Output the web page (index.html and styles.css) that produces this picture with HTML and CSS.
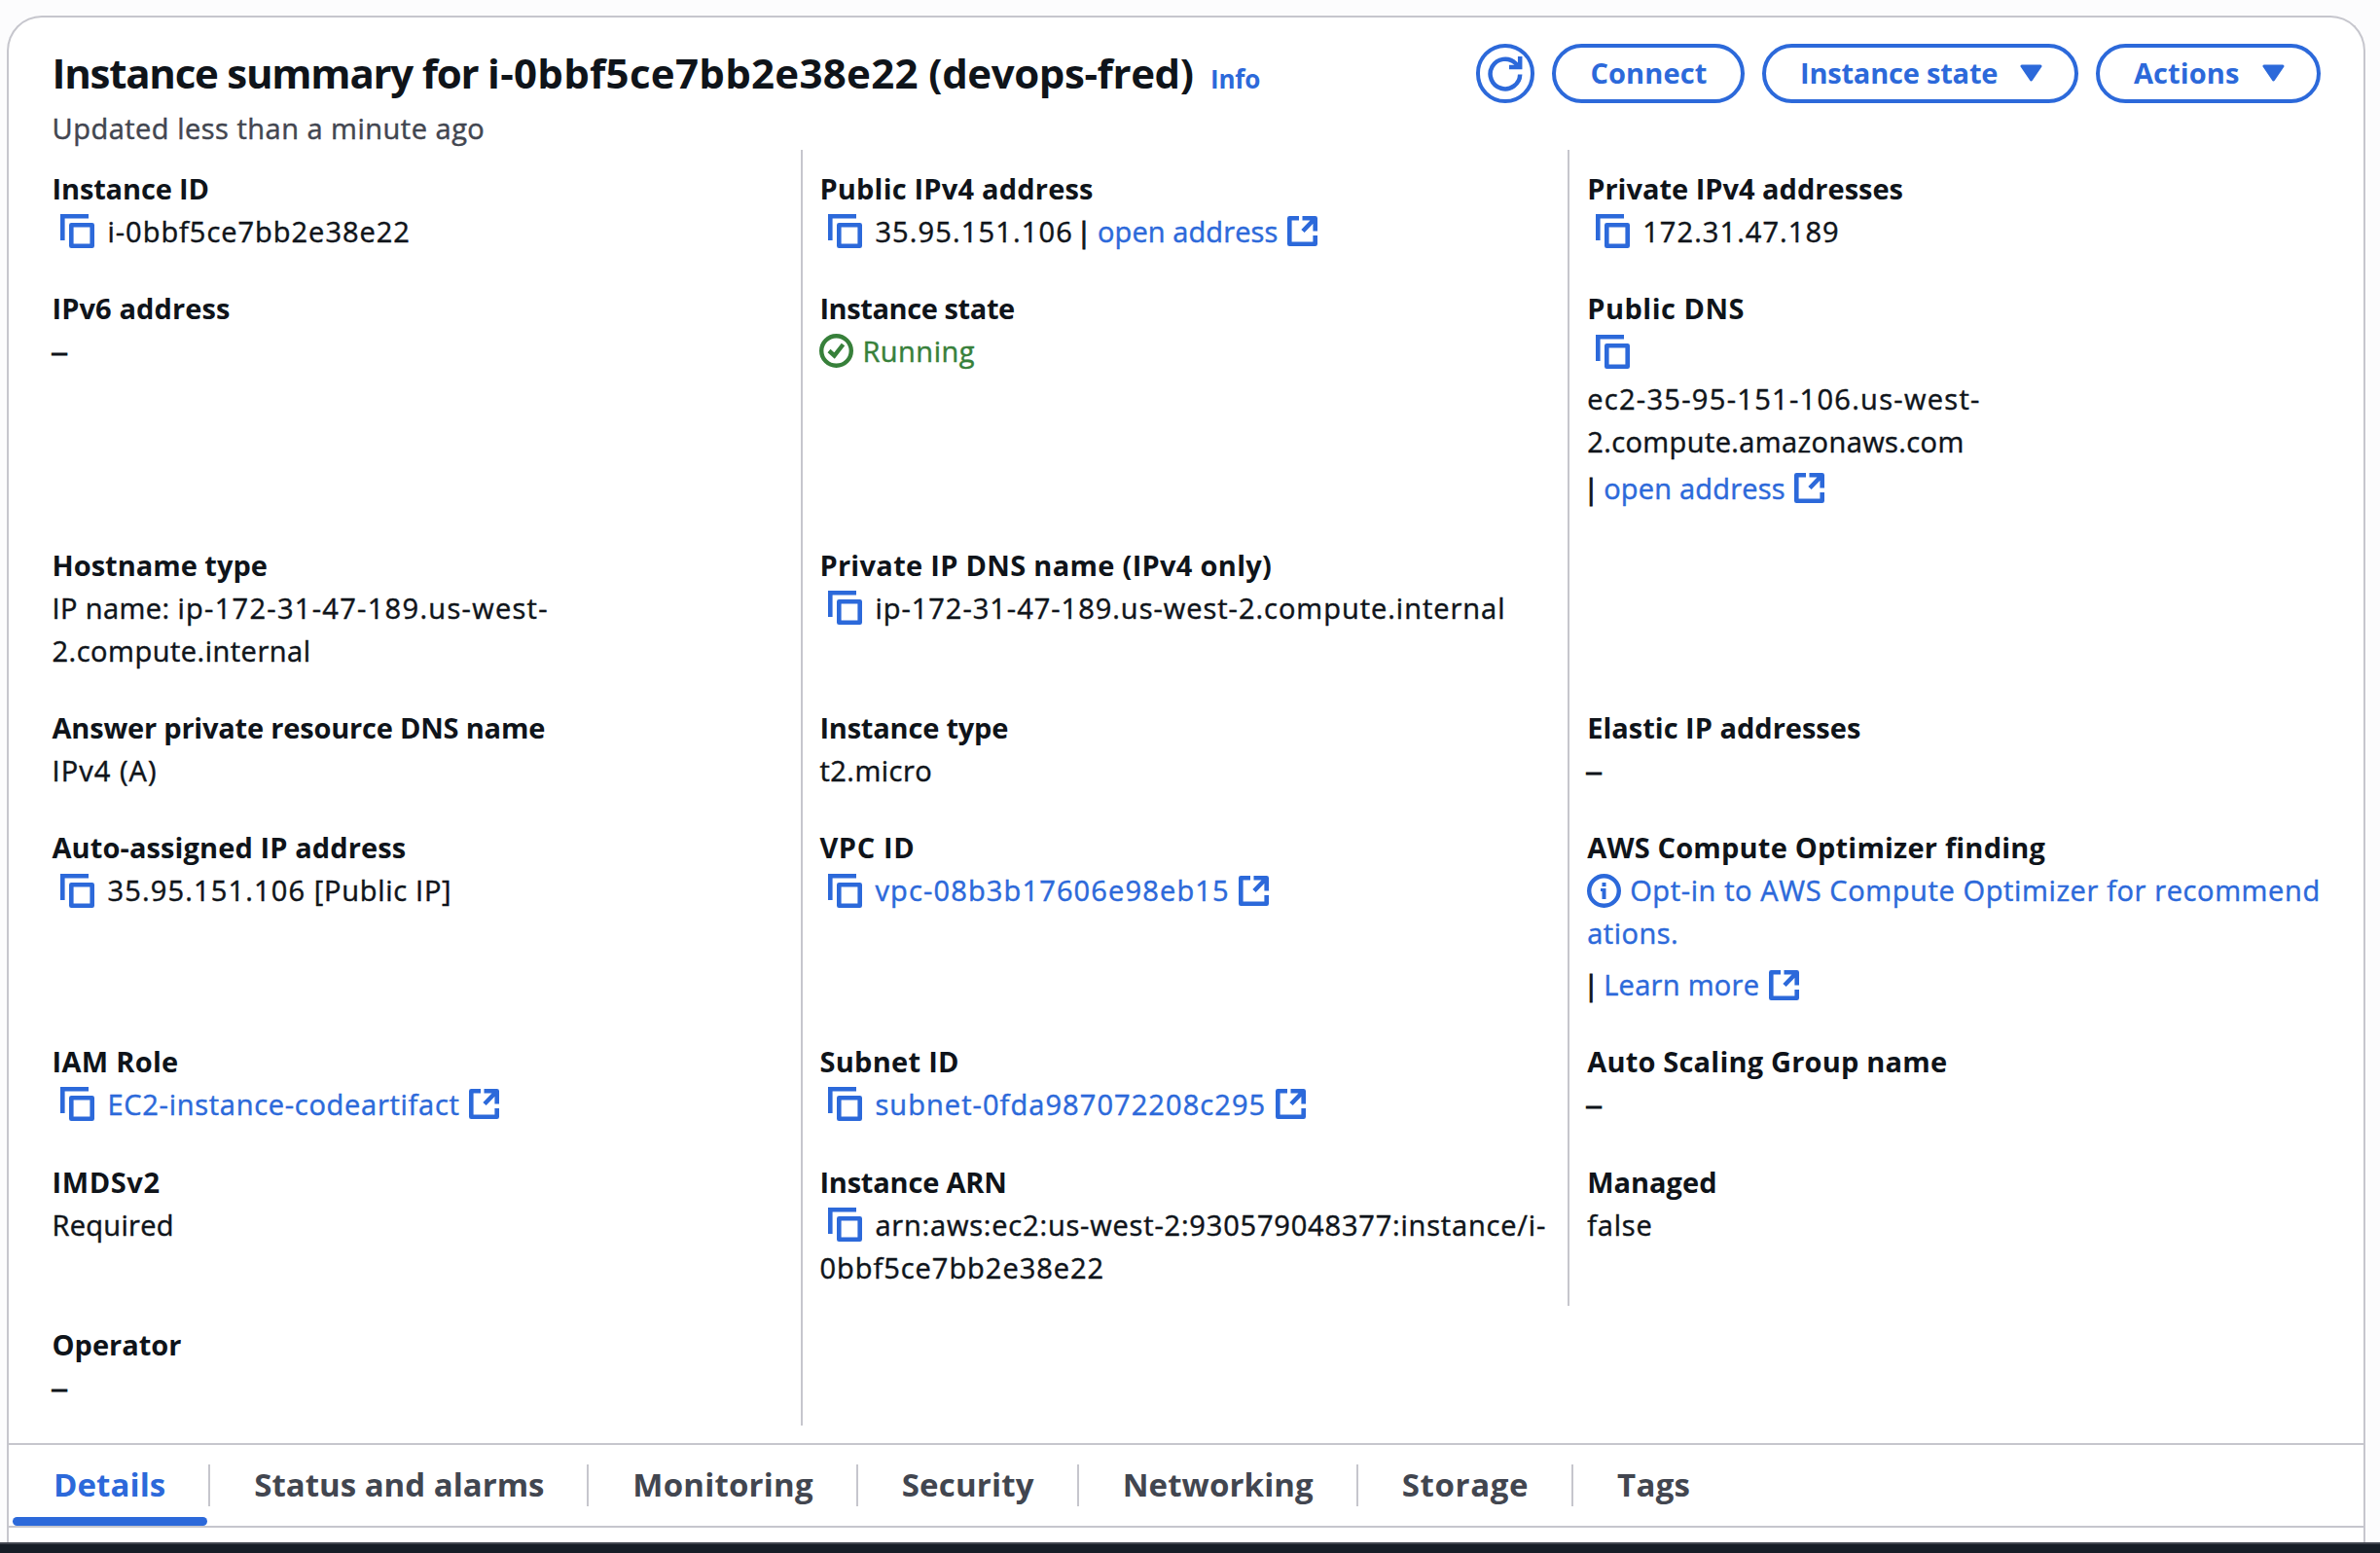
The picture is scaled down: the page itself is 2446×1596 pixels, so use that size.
FILE: index.html
```html
<!DOCTYPE html>
<html lang="en">
<head>
<meta charset="utf-8">
<title>Instance summary</title>
<link rel="stylesheet" href="styles.css">
</head>
<body>
<svg class="defs" aria-hidden="true">
  <symbol id="copy" viewBox="0 0 35 35"><path d="M2.300 27V2.300H29" fill="none" stroke="currentColor" stroke-width="4.600"/><rect x="11.300" y="11.300" width="21.400" height="21.400" fill="none" stroke="currentColor" stroke-width="4.600" stroke-linejoin="round"/></symbol>
  <symbol id="external" viewBox="0 0 31 31"><path d="M12 2.300H2.300V28.700H28.700V20M15.500 2.300H28.700V15.500M28 3L16 15.500" fill="none" stroke="currentColor" stroke-width="4.600" stroke-linejoin="round"/></symbol>
  <symbol id="caret" viewBox="0 0 23 18"><path d="M2 2H21L11.500 16Z" fill="currentColor" stroke="currentColor" stroke-width="3" stroke-linejoin="round"/></symbol>
</svg>
<main class="card">
  <header class="header">
    <div class="heading">
      <h1 class="title"><span><span class="title-text">Instance summary for </span><span class="title-id">i-0bbf5ce7bb2e38e22</span><span class="title-name"> (devops-fred)</span></span><a class="info">Info</a></h1>
      <p class="updated">Updated less than a minute ago</p>
    </div>
    <div class="actions">
      <button class="btn round" aria-label="Refresh"><svg class="refresh" viewBox="0 0 36 36"><path d="M33.200 18.500A15.300 15.300 0 1 1 28.500 7L32 10.500" fill="none" stroke="currentColor" stroke-width="4.500"/><path d="M33.200 0V11H22" fill="none" stroke="currentColor" stroke-width="4.500"/></svg></button>
      <button class="btn connect">Connect</button>
      <button class="btn state"><span class="n2">Instance state</span><svg class="caret"><use href="#caret"/></svg></button>
      <button class="btn menu"><span>Actions</span><svg class="caret"><use href="#caret"/></svg></button>
    </div>
  </header>

  <section class="grid">
    <div class="cell"><h2 class="n1">Instance ID</h2><p><svg class="copy"><use href="#copy"/></svg><span class="p10">i-0bbf5ce7bb2e38e22</span></p></div>
    <div class="cell"><h2 class="p2">Public IPv4 address</h2><p><svg class="copy"><use href="#copy"/></svg><span class="p12">35.95.151.106</span><span class="bar">|</span><a class="p1">open address</a><svg class="ext"><use href="#external"/></svg></p></div>
    <div class="cell"><h2>Private IPv4 addresses</h2><p><svg class="copy"><use href="#copy"/></svg><span class="p11">172.31.47.189</span></p></div>

    <div class="cell"><h2 class="p1">IPv6 address</h2><p><span class="dash">–</span></p></div>
    <div class="cell"><h2 class="n4">Instance state</h2><p class="ok"><svg class="status" viewBox="0 0 35 35"><circle cx="17.500" cy="17.500" r="15.300" fill="none" stroke="currentColor" stroke-width="4.400"/><path d="M10 17.500L15.500 22.500L24.500 11" fill="none" stroke="currentColor" stroke-width="4.400"/></svg><span class="p5">Running</span></p></div>
    <div class="cell"><h2 class="p5">Public DNS</h2><p class="icon-line"><svg class="copy"><use href="#copy"/></svg></p><p class="p13">ec2-35-95-151-106.us-west-</p><p class="p4">2.compute.amazonaws.com</p><p class="dns-link"><span class="bar lead">|</span><a class="p2">open address</a><svg class="ext"><use href="#external"/></svg></p></div>

    <div class="cell"><h2>Hostname type</h2><p><span class="p4 pre">IP name: </span><span class="p13">ip-172-31-47-189.us-west-</span></p><p class="p5">2.compute.internal</p></div>
    <div class="cell"><h2 class="p3">Private IP DNS name (IPv4 only)</h2><p><svg class="copy"><use href="#copy"/></svg><span class="p10">ip-172-31-47-189.us-west-2.compute.internal</span></p></div>
    <div class="cell"></div>

    <div class="cell"><h2 class="n2">Answer private resource DNS name</h2><p class="p11">IPv4 (A)</p></div>
    <div class="cell"><h2 class="n2">Instance type</h2><p class="p5">t2.micro</p></div>
    <div class="cell"><h2>Elastic IP addresses</h2><p><span class="dash">–</span></p></div>

    <div class="cell"><h2 class="p1">Auto-assigned IP address</h2><p><svg class="copy"><use href="#copy"/></svg><span class="p12 pre">35.95.151.106 </span><span class="p7">[Public IP]</span></p></div>
    <div class="cell"><h2 class="p6">VPC ID</h2><p><svg class="copy"><use href="#copy"/></svg><a class="p12">vpc-08b3b17606e98eb15</a><svg class="ext"><use href="#external"/></svg></p></div>
    <div class="cell"><h2 class="p2">AWS Compute Optimizer finding</h2><p class="link"><svg class="status" viewBox="0 0 35 35"><circle cx="17.500" cy="17.500" r="15.300" fill="none" stroke="currentColor" stroke-width="4.400"/><path d="M15.500 9H19.500V13H15.500ZM14 15H19.500V26H15.500V18H14Z" fill="currentColor"/></svg><a class="p6">Opt-in to AWS Compute Optimizer for recommend</a></p><p class="link p5">ations.</p><p class="learn"><span class="bar lead">|</span><a class="p3">Learn more</a><svg class="ext"><use href="#external"/></svg></p></div>

    <div class="cell"><h2 class="p3">IAM Role</h2><p><svg class="copy"><use href="#copy"/></svg><a class="p7">EC2-instance-codeartifact</a><svg class="ext"><use href="#external"/></svg></p></div>
    <div class="cell"><h2 class="p3">Subnet ID</h2><p><svg class="copy"><use href="#copy"/></svg><a class="p11">subnet-0fda987072208c295</a><svg class="ext"><use href="#external"/></svg></p></div>
    <div class="cell"><h2 class="p2">Auto Scaling Group name</h2><p><span class="dash">–</span></p></div>

    <div class="cell"><h2 class="p6">IMDSv2</h2><p class="p3">Required</p></div>
    <div class="cell"><h2 class="n2">Instance ARN</h2><p><svg class="copy"><use href="#copy"/></svg><span class="p8">arn:aws:ec2:us-west-2:930579048377:instance/i-</span></p><p class="p10">0bbf5ce7bb2e38e22</p></div>
    <div class="cell"><h2>Managed</h2><p class="p8">false</p></div>

    <div class="cell"><h2>Operator</h2><p><span class="dash">–</span></p></div>
  </section>

  <nav class="tabs">
    <a class="tab active p1">Details</a>
    <a class="tab">Status and alarms</a>
    <a class="tab p2">Monitoring</a>
    <a class="tab p2">Security</a>
    <a class="tab p1">Networking</a>
    <a class="tab p6">Storage</a>
    <a class="tab p3">Tags</a>
  </nav>
</main>
<footer class="footer"></footer>
</body>
</html>
```
FILE: styles.css
```css
* { box-sizing: border-box; }
body {
  margin: 0;
  height: 1596px;
  overflow: hidden;
  display: flex;
  flex-direction: column;
  background: #fcfcfd;
  color: #0f141a;
  font: 29px/44px "Open Sans", "Noto Sans", sans-serif;
  white-space: nowrap;
}
h1, h2, p { margin: 0; font-size: inherit; }
p { -webkit-text-stroke: .45px currentColor; }
a, .link { color: #2c69da; }
svg { flex: none; }
.defs { position: absolute; width: 0; height: 0; }

.card {
  flex: 1;
  margin: 16px 15px 0 7px;
  border: 2px solid #c6c6cd;
  border-bottom: 0;
  border-radius: 36px 36px 0 0;
  background: #fff;
  display: flex;
  flex-direction: column;
}

.header {
  display: flex;
  justify-content: space-between;
  height: 136px;
  padding: 27px 44px 0 44.500px;
}
.heading { padding-top: 4px; }
.title {
  display: flex;
  align-items: baseline;
  gap: 17.500px;
  font-size: 42px;
  line-height: 52px;
  height: 52px;
  white-space: pre;
}
.title-text { letter-spacing: -1.230px; }
.title-id { letter-spacing: .3px; }
.title-name { letter-spacing: -.4px; }
.info { font-size: 26px; letter-spacing: -.2px; }
.updated { margin-top: 8.500px; color: #424650; letter-spacing: .5px; }

.actions { display: flex; gap: 18px; }
.btn {
  display: flex;
  align-items: center;
  justify-content: space-between;
  height: 61px;
  padding: 0 33px 2px 35px;
  border: 4px solid #2c69da;
  border-radius: 31px;
  background: #fff;
  color: #2c69da;
  font: bold 29px/44px "Open Sans", "Noto Sans", sans-serif;
}
.round { width: 60px; padding: 0; justify-content: center; }
.connect { width: 198px; justify-content: center; padding-left: 34px; letter-spacing: .15px; }
.state { width: 325px; }
.menu { width: 231px; letter-spacing: .1px; }
.refresh { width: 36px; height: 36px; }
.caret { width: 23px; height: 18px; margin-top: 1px; }

.grid {
  display: grid;
  grid-template-columns: 771.500px 788px 1fr;
  grid-template-rows: 123.200px 264px 167.200px 123.200px 219.500px 124px 167.200px 122.400px;
  padding-left: 44.500px;
}
.cell { padding: 17.600px 0 0 17.400px; }
.cell:nth-child(3n+1) { padding-left: 0; }
.cell:nth-child(3n) { padding-left: 18.200px; }
.cell:not(:nth-child(3n)) { border-right: 2px solid #c6c6cd; }
.cell p { display: flex; align-items: center; height: 44px; }
.copy { width: 35px; height: 35px; margin: 0 13.500px 0 8.500px; color: #2c69da; }
.ext { width: 31px; height: 31px; margin-left: 9.500px; color: #2c69da; }
.status { width: 35px; height: 35px; margin-right: 9px; }
.ok { color: #37803a; }
.pre { white-space: pre; }
.bar { margin: 0 9px 0 3px; width: 13px; text-align: center; -webkit-text-stroke-width: 1px; }
.bar.lead { width: 8px; margin: 0 9px 0 0; text-indent: -4px; }
.dash { margin-left: -2px; transform: scaleX(1.25); transform-origin: left; -webkit-text-stroke-width: 1px; }
.cell .icon-line { height: 49px; padding-bottom: 4px; }
.cell .dns-link { margin-top: 4px; }
.cell .learn { margin-top: 9px; }

.tabs {
  display: flex;
  height: 87px;
  margin-top: 18px;
  border: solid #c6c6cd;
  border-width: 2px 0;
}
.tab {
  display: flex;
  align-items: center;
  position: relative;
  padding: 0 45px 0 45.900px;
  font-size: 33px;
  font-weight: bold;
  color: #424650;
}
.tab:not(:last-child)::after {
  content: "";
  position: absolute;
  right: -1px;
  top: 20px;
  width: 2px;
  height: 43px;
  background: #c6c6cd;
}
.tab.active { color: #2c69da; }
.active::before {
  content: "";
  position: absolute;
  left: 4px;
  right: 2px;
  bottom: 0;
  height: 9px;
  border-radius: 5px;
  background: #2c69da;
}
.footer { height: 11px; border-top: 2px solid #424650; background: #161d26; }

/* tracking steps */
.n4 { letter-spacing: -.4px; }
.n2 { letter-spacing: -.2px; }
.n1 { letter-spacing: -.14px; }
.p1 { letter-spacing: .1px; }
.p2 { letter-spacing: .2px; }
.p3 { letter-spacing: .3px; }
.p4 { letter-spacing: .4px; }
.p5 { letter-spacing: .5px; }
.p6 { letter-spacing: .62px; }
.p7 { letter-spacing: .72px; }
.p8 { letter-spacing: .81px; }
.p10 { letter-spacing: .98px; }
.p11 { letter-spacing: 1.070px; }
.p12 { letter-spacing: 1.150px; }
.p13 { letter-spacing: 1.300px; }
```
